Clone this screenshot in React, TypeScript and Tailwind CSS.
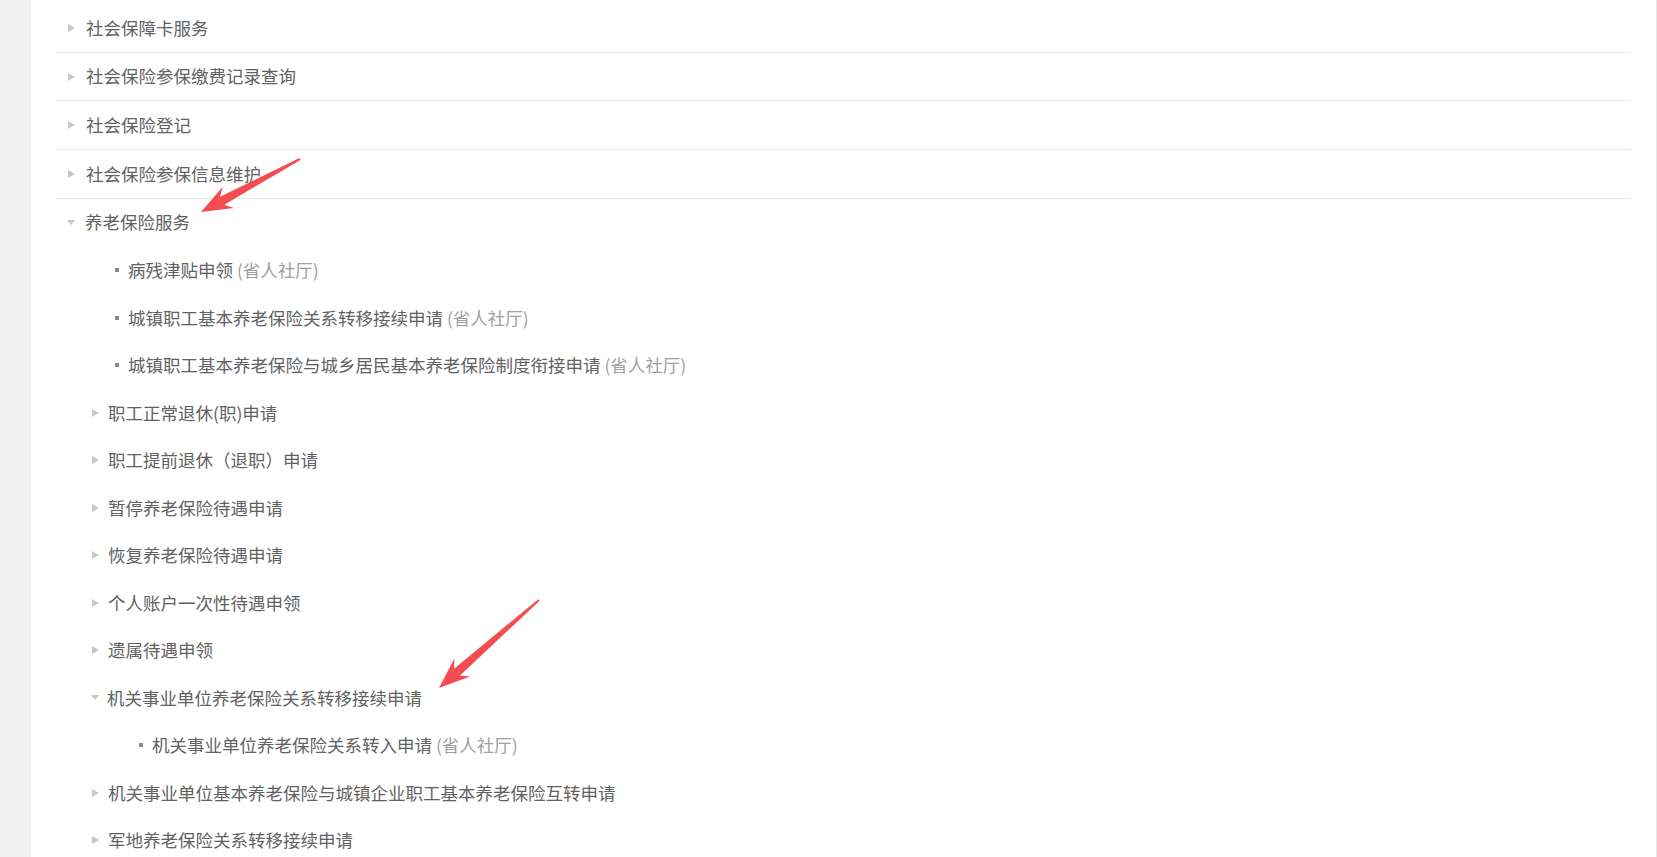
type Node = {
  label: string;
  source?: string;
  open?: boolean;
  children?: Node[];
};

const tree: Node[] = [
  { label: "社会保障卡服务" },
  { label: "社会保险参保缴费记录查询" },
  { label: "社会保险登记" },
  { label: "社会保险参保信息维护" },
  {
    label: "养老保险服务",
    open: true,
    children: [
      { label: "病残津贴申领", source: "省人社厅" },
      { label: "城镇职工基本养老保险关系转移接续申请", source: "省人社厅" },
      { label: "城镇职工基本养老保险与城乡居民基本养老保险制度衔接申请", source: "省人社厅" },
      { label: "职工正常退休(职)申请", children: [] },
      { label: "职工提前退休（退职）申请", children: [] },
      { label: "暂停养老保险待遇申请", children: [] },
      { label: "恢复养老保险待遇申请", children: [] },
      { label: "个人账户一次性待遇申领", children: [] },
      { label: "遗属待遇申领", children: [] },
      {
        label: "机关事业单位养老保险关系转移接续申请",
        open: true,
        children: [{ label: "机关事业单位养老保险关系转入申请", source: "省人社厅" }],
      },
      { label: "机关事业单位基本养老保险与城镇企业职工基本养老保险互转申请", children: [] },
      { label: "军地养老保险关系转移接续申请", children: [] },
    ],
  },
];

function Caret({ open }: { open?: boolean }) {
  if (open)
    return (
      <span className="inline-block w-0 h-0 border-x-[4.5px] border-x-transparent border-t-[5px] border-t-[#c3c7cf]" />
    );
  return (
    <span className="inline-block w-0 h-0 border-y-[4px] border-y-transparent border-l-[7px] border-l-[#c3c7cf]" />
  );
}

function Leaf({ item, deep }: { item: Node; deep: boolean }) {
  return (
    <div className={`flex items-center h-[47.5px] ${deep ? "pl-[83px]" : "pl-[59px]"}`}>
      <span className="inline-block w-[4px] h-[4px] bg-[#8a8a8a]" />
      <span className="ml-[9px] text-[#626262] whitespace-nowrap">
        {item.label}
        {item.source && <span className="text-[#a0a0a0]"> ({item.source})</span>}
      </span>
    </div>
  );
}

function SubFolder({ item }: { item: Node }) {
  return (
    <>
      <div className={`flex items-center h-[47.5px] ${item.open ? "pl-[35px]" : "pl-[36px]"}`}>
        <Caret open={item.open} />
        <span className={`${item.open ? "ml-[8px]" : "ml-[9px]"} text-[#626262] whitespace-nowrap`}>
          {item.label}
        </span>
      </div>
      {item.open && item.children?.map((c) => <Leaf key={c.label} item={c} deep />)}
    </>
  );
}

function TopRow({ item }: { item: Node }) {
  return (
    <div className={item.open ? "" : "border-b border-[#e8e8e8]"}>
      <div className={`flex items-center h-[47.7px] ${item.open ? "pl-[11px]" : "pl-[12px]"}`}>
        <Caret open={item.open} />
        <span className={`${item.open ? "ml-[10px]" : "ml-[11px]"} text-[#626262] whitespace-nowrap`}>
          {item.label}
        </span>
      </div>
      {item.open &&
        item.children?.map((c) =>
          c.children ? <SubFolder key={c.label} item={c} /> : <Leaf key={c.label} item={c} deep={false} />
        )}
    </div>
  );
}

type Pt = [number, number];

function arrowPoints(tail: Pt, tip: Pt) {
  const dx = tip[0] - tail[0];
  const dy = tip[1] - tail[1];
  const len = Math.hypot(dx, dy);
  const u: Pt = [dx / len, dy / len];
  const n: Pt = [-u[1], u[0]];
  const at = (back: number, side: number): Pt => [
    tip[0] - u[0] * back + n[0] * side,
    tip[1] - u[1] * back + n[1] * side,
  ];
  const pts: Pt[] = [
    tip,
    at(31, 12),
    at(24, 4.5),
    [tail[0] + n[0] * 1, tail[1] + n[1] * 1],
    [tail[0] - n[0] * 1, tail[1] - n[1] * 1],
    at(24, -4.5),
    at(31, -12),
  ];
  return pts.map((p) => p.join(",")).join(" ");
}

export default function App() {
  return (
    <div className="relative flex h-[857px] w-full overflow-hidden bg-white font-['Microsoft_YaHei','Noto_Sans_CJK_SC',sans-serif] text-[17.5px]">
      <div className="w-[31px] shrink-0 bg-[#f0f0f0]" />
      <div className="flex-1 bg-white pl-[25px] pr-[25px] pt-[4px] border-r border-[#e6e6e6]">
        {tree.map((item) => (
          <TopRow key={item.label} item={item} />
        ))}
      </div>

      {/* annotation arrows */}
      <svg className="absolute left-0 top-0 pointer-events-none" width="1657" height="857">
        <polygon points={arrowPoints([300, 159], [201, 212])} fill="#f44c50" />
        <polygon points={arrowPoints([539, 600], [439, 688])} fill="#f44c50" />
      </svg>
    </div>
  );
}
